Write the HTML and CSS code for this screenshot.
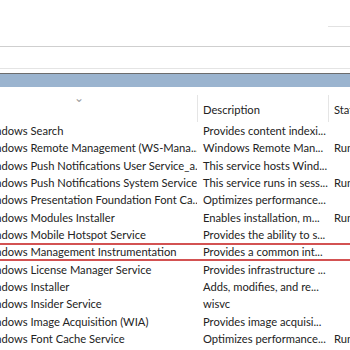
FILE: index.html
```html
<!DOCTYPE html>
<html lang="en">
<head>
    <meta charset="UTF-8">
    <title>Services</title>
    <link rel="stylesheet" href="styles.css">
</head>
<body>
    <div class="toolbar"><span class="toolbar-tab"></span></div>
    <div class="address-bar"></div>
    <div class="title-strip"></div>

    <div class="services">
        <div class="list-head">
            <div class="col-name"><span class="sort-arrow">&#8964;</span></div>
            <div class="col-desc">Description</div>
            <div class="col-status">Status</div>
        </div>

        <div class="row"><div class="col-name">Windows Search</div><div class="col-desc">Provides content indexi...</div><div class="col-status"></div></div>
        <div class="row"><div class="col-name">Windows Remote Management (WS-Mana...</div><div class="col-desc">Windows Remote Man...</div><div class="col-status">Running</div></div>
        <div class="row"><div class="col-name">Windows Push Notifications User Service_a...</div><div class="col-desc">This service hosts Wind...</div><div class="col-status"></div></div>
        <div class="row"><div class="col-name">Windows Push Notifications System Service</div><div class="col-desc">This service runs in sess...</div><div class="col-status">Running</div></div>
        <div class="row"><div class="col-name">Windows Presentation Foundation Font Ca...</div><div class="col-desc">Optimizes performance...</div><div class="col-status"></div></div>
        <div class="row"><div class="col-name">Windows Modules Installer</div><div class="col-desc">Enables installation, m...</div><div class="col-status">Running</div></div>
        <div class="row"><div class="col-name">Windows Mobile Hotspot Service</div><div class="col-desc">Provides the ability to s...</div><div class="col-status"></div></div>
        <div class="row marked"><div class="col-name">Windows Management Instrumentation</div><div class="col-desc">Provides a common int...</div><div class="col-status"></div></div>
        <div class="row"><div class="col-name">Windows License Manager Service</div><div class="col-desc">Provides infrastructure ...</div><div class="col-status"></div></div>
        <div class="row"><div class="col-name">Windows Installer</div><div class="col-desc">Adds, modifies, and re...</div><div class="col-status"></div></div>
        <div class="row"><div class="col-name">Windows Insider Service</div><div class="col-desc">wisvc</div><div class="col-status"></div></div>
        <div class="row"><div class="col-name">Windows Image Acquisition (WIA)</div><div class="col-desc">Provides image acquisi...</div><div class="col-status"></div></div>
        <div class="row"><div class="col-name">Windows Font Cache Service</div><div class="col-desc">Optimizes performance...</div><div class="col-status">Running</div></div>
    </div>
</body>
</html>
```

FILE: styles.css
```css
* { box-sizing: border-box; }
html, body { margin: 0; padding: 0; overflow: hidden; }
body { width: 350px; height: 350px; background: #fff; font-family: Lato, "Noto Sans", sans-serif; font-size: 11.2px; color: #232323; }

.toolbar { height: 47px; border-bottom: 1px solid #cfcfcf; display: flex; justify-content: flex-end; }
.toolbar-tab { width: 22px; height: 27px; border-bottom: 1px solid #e2e2e2; }
.address-bar { height: 22px; border-bottom: 1px solid #e4e4e4; }
.title-strip { margin-top: 4px; height: 14px; border-top: 1px solid #6d6d6d; background: #9bb4cf; }

.services { margin-left: -19px; width: 400px; }
.list-head { display: flex; height: 35px; }
.list-head > div { margin-top: 8px; padding-top: 8px; }
.list-head .col-desc, .list-head .col-status { border-left: 1px solid #e5e5e5; padding-left: 5px; }
.list-head .col-name { padding-left: 93px; }
.sort-arrow { display: block; margin-top: -11px; width: 12px; color: #a0a0a0; font-size: 12px; line-height: 12px; }

.row { display: flex; height: 17.33px; line-height: 17.33px; white-space: nowrap; }
.row.marked { box-shadow: inset 0 2px 0 #d35252, inset 0 -2px 0 #d35252; }

.col-name { width: 216px; overflow: hidden; }
.col-desc { width: 131px; padding-left: 6px; overflow: hidden; }
.col-status { flex: 1; padding-left: 6px; overflow: hidden; }
```
